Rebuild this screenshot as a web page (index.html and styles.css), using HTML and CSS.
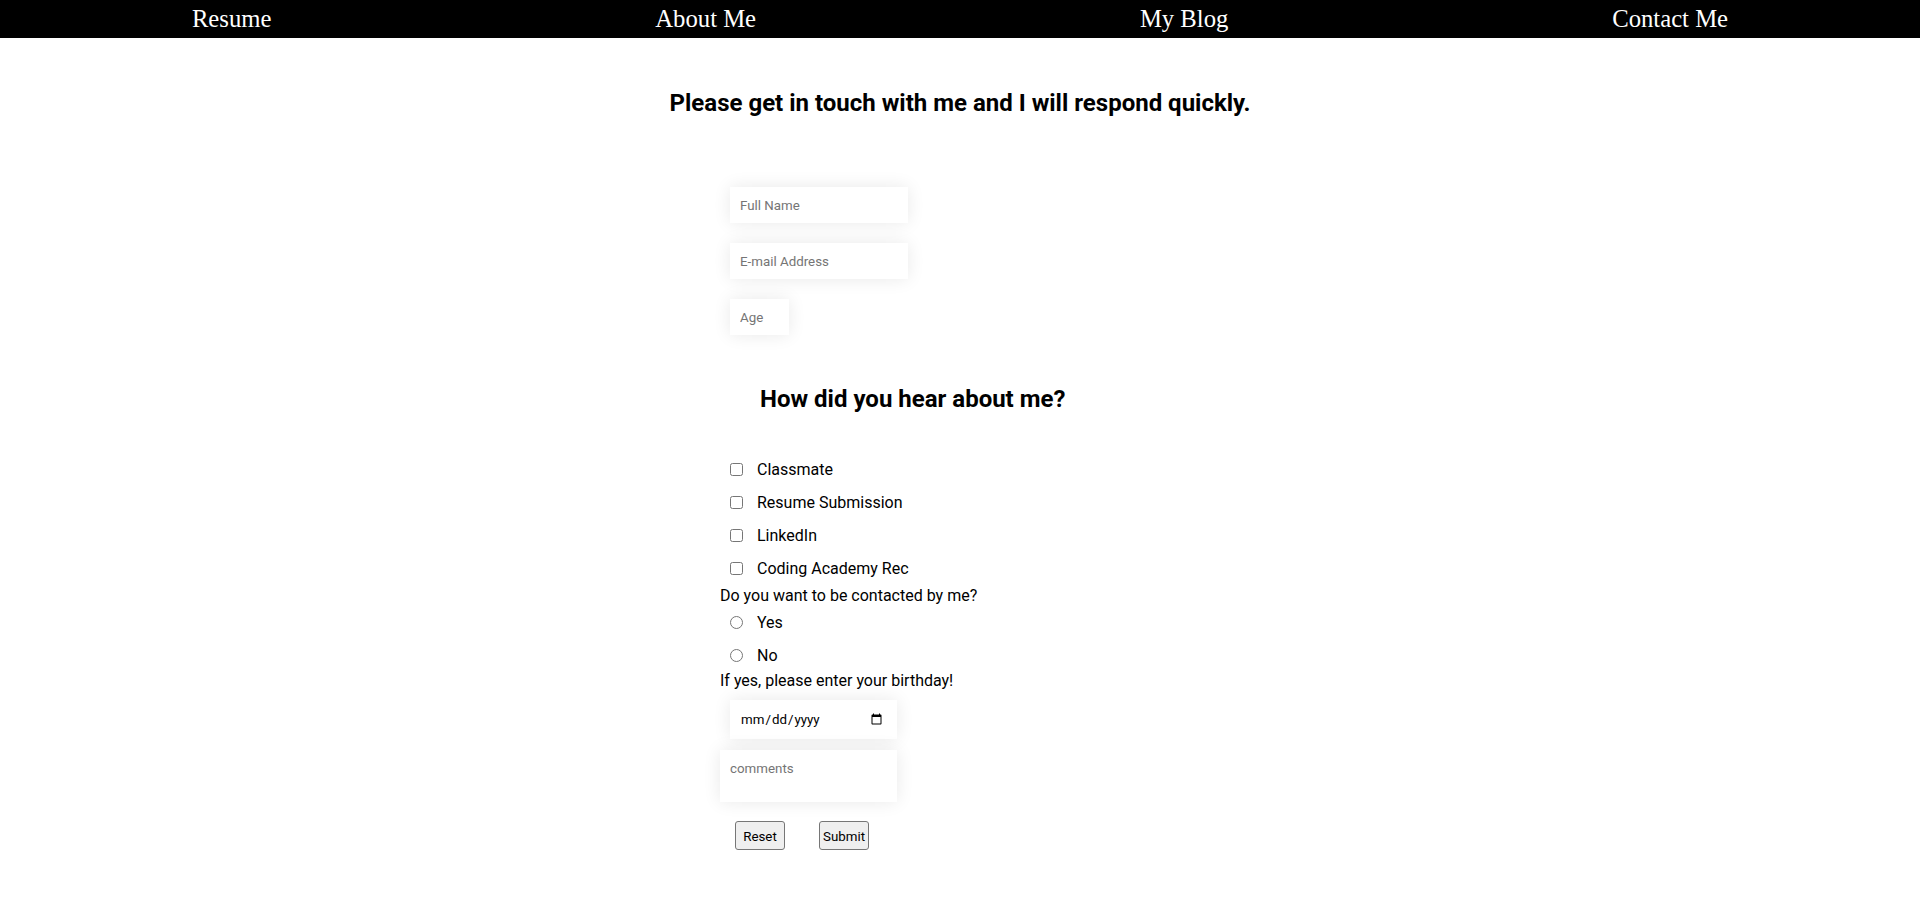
FILE: index.html
```html
<!DOCTYPE html>
<html lang="en">
<head>
<meta charset="utf-8">
<title>Contact Me</title>
<link rel="stylesheet" href="styles.css">
</head>
<body>
<nav class="nav">
  <a class="nav-link" href="#">Resume</a>
  <a class="nav-link" href="#">About Me</a>
  <a class="nav-link" href="#">My Blog</a>
  <a class="nav-link" href="#">Contact Me</a>
</nav>
<main class="page">
  <h1 class="title">Please get in touch with me and I will respond quickly.</h1>
  <form class="form">
    <input class="field field-wide" type="text" placeholder="Full Name">
    <input class="field field-wide" type="email" placeholder="E-mail Address">
    <input class="field field-age" type="text" placeholder="Age">
    <h2 class="subtitle">How did you hear about me?</h2>
    <div class="options">
      <label class="option"><input class="check" type="checkbox">Classmate</label>
      <label class="option"><input class="check" type="checkbox">Resume Submission</label>
      <label class="option"><input class="check" type="checkbox">LinkedIn</label>
      <label class="option"><input class="check" type="checkbox">Coding Academy Rec</label>
    </div>
    <p class="question">Do you want to be contacted by me?</p>
    <div class="options">
      <label class="option"><input class="check" type="radio" name="contact">Yes</label>
      <label class="option"><input class="check" type="radio" name="contact">No</label>
    </div>
    <p class="question question-tight">If yes, please enter your birthday!</p>
    <input class="field field-date" type="date">
    <textarea class="comments" placeholder="comments"></textarea>
    <div class="buttons">
      <button class="btn" type="reset">Reset</button>
      <button class="btn" type="submit">Submit</button>
    </div>
  </form>
</main>
</body>
</html>
```

FILE: styles.css
```css
html, body {
  margin: 0;
  padding: 0;
  background: #ffffff;
}

body {
  font-family: Roboto, "Liberation Sans", Arial, sans-serif;
  color: #000000;
}

.nav {
  height: 38px;
  background: #000000;
  display: flex;
  justify-content: space-around;
  align-items: center;
}

.nav-link {
  font-family: "Liberation Serif", "Times New Roman", serif;
  font-size: 24.7px;
  line-height: 28px;
  color: #ffffff;
  text-decoration: none;
}

.page {
  display: flex;
  flex-direction: column;
}

.title {
  margin: 51px 0 0;
  font-size: 24px;
  line-height: 28px;
  font-weight: 700;
  text-align: center;
}

.form {
  width: 480px;
  margin: 70px auto 0;
  display: flex;
  flex-direction: column;
  align-items: flex-start;
}

.field {
  box-sizing: border-box;
  border: none;
  outline: none;
  background: #ffffff;
  box-shadow: 0 0 18px rgba(0, 0, 0, 0.09);
  font-family: Roboto, "Liberation Sans", Arial, sans-serif;
  font-size: 13.33px;
  color: #000000;
  padding: 0 10px;
  margin: 0 0 0 10px;
}

.field::placeholder,
.comments::placeholder {
  color: #757575;
}

.field-wide {
  width: 178px;
  height: 36px;
  margin-bottom: 20px;
}

.field-age {
  width: 59px;
  height: 36px;
}

.subtitle {
  margin: 50px 0 0 40px;
  font-size: 24px;
  line-height: 28px;
  font-weight: 700;
}

.options {
  display: flex;
  flex-direction: column;
}

.subtitle + .options {
  margin-top: 40px;
}

.option {
  height: 33px;
  display: flex;
  align-items: center;
  font-size: 16px;
  line-height: 19px;
}

.check {
  width: 13px;
  height: 13px;
  margin: 0 14px 0 10px;
}

.question {
  margin: 1px 0 0;
  font-size: 16px;
  line-height: 19px;
}

.question + .options {
  margin-top: 1px;
}

.question-tight {
  margin-top: -1px;
}

.field-date {
  width: 167px;
  height: 39px;
  margin-top: 10px;
  padding: 1px 12px 0 10px;
}

.comments {
  box-sizing: border-box;
  width: 177px;
  height: 52px;
  margin: 11px 0 0;
  padding: 11px 10px 10px;
  border: none;
  outline: none;
  resize: none;
  background: #ffffff;
  box-shadow: 0 0 18px rgba(0, 0, 0, 0.09);
  font-family: Roboto, "Liberation Sans", Arial, sans-serif;
  font-size: 13.33px;
  line-height: 16px;
}

.buttons {
  display: flex;
  gap: 34px;
  margin: 19px 0 0 15px;
}

.btn {
  box-sizing: border-box;
  width: 50px;
  height: 29px;
  padding: 1px 0 0;
  background: #efefef;
  border: 1px solid #767676;
  border-radius: 3px;
  font-family: Roboto, "Liberation Sans", Arial, sans-serif;
  font-size: 13.33px;
  color: #000000;
}
```
